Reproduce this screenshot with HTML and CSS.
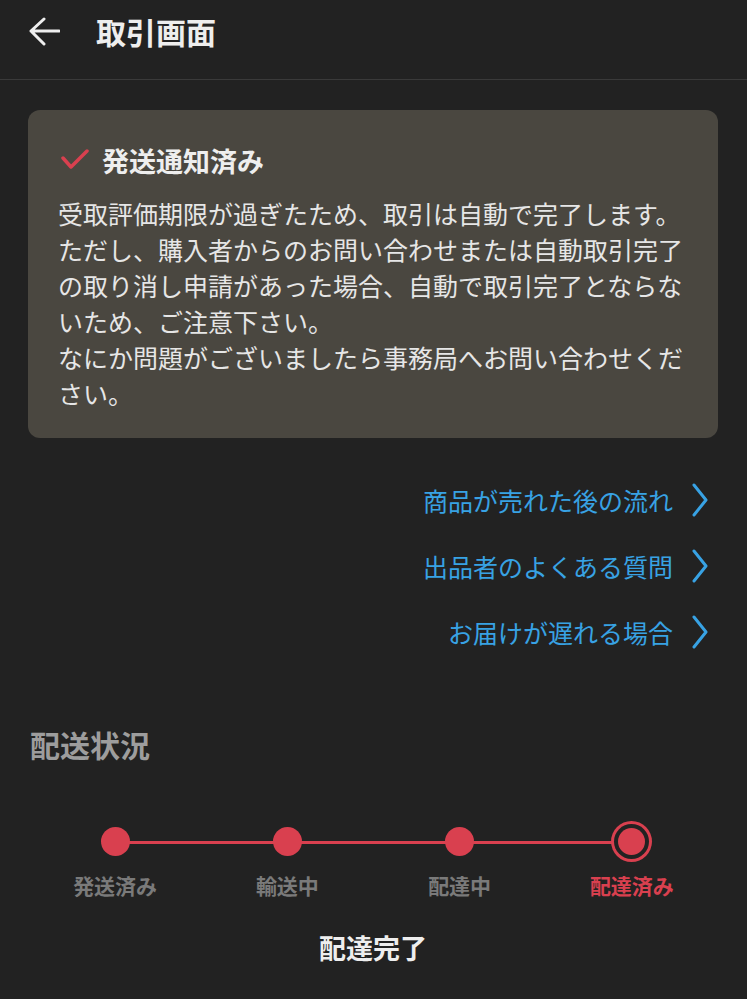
FILE: index.html
```html
<!DOCTYPE html>
<html lang="ja">
<head>
    <meta charset="UTF-8">
    <meta name="viewport" content="width=device-width, initial-scale=1.0">
    <title>取引画面</title>
    <link rel="stylesheet" href="styles.css">
</head>
<body>
    <header class="topbar">
        <svg class="back" width="32" height="32" viewBox="0 0 32 32">
            <path d="M3 14 L16 2 M3 14 L16 27 M3 14 L31 14" fill="none" stroke="#eeeeee" stroke-width="3" stroke-linecap="round" stroke-linejoin="round"/>
        </svg>
        <h1 class="title">取引画面</h1>
    </header>

    <main class="content">
        <section class="notice">
            <div class="notice-head">
                <svg class="check" width="28" height="24" viewBox="0 0 28 24">
                    <path d="M2 10 L10 19 L26 3" fill="none" stroke="#d9404f" stroke-width="3.5" stroke-linecap="round" stroke-linejoin="round"/>
                </svg>
                <span>発送通知済み</span>
            </div>
            <p class="notice-body">受取評価期限が過ぎたため、取引は自動で完了します。<br>ただし、購入者からのお問い合わせまたは自動取引完了の取り消し申請があった場合、自動で取引完了とならないため、ご注意下さい。<br>なにか問題がございましたら事務局へお問い合わせください。</p>
        </section>

        <nav class="links">
            <a class="link" href="#">商品が売れた後の流れ<svg class="chev" width="16" height="34" viewBox="0 0 16 34"><path d="M2 2 L14 17 L2 32" fill="none" stroke="#38a2e4" stroke-width="3" stroke-linecap="round" stroke-linejoin="round"/></svg></a>
            <a class="link" href="#">出品者のよくある質問<svg class="chev" width="16" height="34" viewBox="0 0 16 34"><path d="M2 2 L14 17 L2 32" fill="none" stroke="#38a2e4" stroke-width="3" stroke-linecap="round" stroke-linejoin="round"/></svg></a>
            <a class="link" href="#">お届けが遅れる場合<svg class="chev" width="16" height="34" viewBox="0 0 16 34"><path d="M2 2 L14 17 L2 32" fill="none" stroke="#38a2e4" stroke-width="3" stroke-linecap="round" stroke-linejoin="round"/></svg></a>
        </nav>

        <h2 class="section-title">配送状況</h2>

        <div class="stepper">
            <div class="step">
                <span class="dot"></span>
                <span class="label">発送済み</span>
            </div>
            <div class="step">
                <span class="dot"></span>
                <span class="label">輸送中</span>
            </div>
            <div class="step">
                <span class="dot"></span>
                <span class="label">配達中</span>
            </div>
            <div class="step current">
                <span class="dot"></span>
                <span class="label">配達済み</span>
            </div>
        </div>

        <p class="status">配達完了</p>
    </main>
</body>
</html>
```

FILE: styles.css
```css
body {
    margin: 0;
    background-color: #222222;
    color: #e6e6e6;
    font-family: "Noto Sans CJK JP", "Noto Sans", sans-serif;
}
.topbar {
    display: flex;
    align-items: center;
    height: 79px;
    border-bottom: 1px solid #3a3a3a;
    padding-left: 28px;
    box-sizing: content-box;
}
.back {
    margin-top: -14px;
    margin-right: 36px;
}
.title {
    margin: 0 0 18px 0;
    font-size: 30px;
    font-weight: 700;
    color: #eeeeee;
}
.content {
    padding: 0 29px 0 28px;
}
.notice {
    margin-top: 30px;
    background-color: #4a4740;
    border-radius: 12px;
    padding: 30px 30px 27px 30px;
}
.notice-head {
    display: flex;
    align-items: center;
    height: 40px;
    font-size: 27px;
    font-weight: 700;
    color: #eeeeee;
}
.check {
    margin-left: 3px;
    margin-right: 13px;
}
.notice-body {
    margin: 15px 0 0 0;
    font-size: 25px;
    line-height: 36px;
    color: #e6e6e6;
}
.links {
    margin-top: 44px;
    display: flex;
    flex-direction: column;
    align-items: flex-end;
    gap: 30px;
    padding-right: 10px;
}
.link {
    display: flex;
    align-items: center;
    height: 36px;
    font-size: 25px;
    color: #38a2e4;
    text-decoration: none;
}
.chev {
    margin-left: 19px;
}
.section-title {
    margin: 72px 0 0 2px;
    font-size: 30px;
    line-height: 45px;
    font-weight: 700;
    color: #9d9d9d;
}
.stepper {
    position: relative;
    display: grid;
    grid-template-columns: repeat(4, 1fr);
    margin-top: 53px;
    padding-left: 1px;
}
.stepper::before {
    content: "";
    position: absolute;
    top: 21px;
    left: 12.5%;
    right: 12.5%;
    height: 3px;
    background-color: #d9404f;
}
.step {
    display: flex;
    flex-direction: column;
    align-items: center;
}
.dot {
    position: relative;
    width: 29px;
    height: 29px;
    margin: 7px 0 8px;
    border-radius: 50%;
    background-color: #d9404f;
}
.step.current .dot {
    width: 27px;
    height: 27px;
    margin: 8px 0 9px;
    box-shadow: 0 0 0 4px #222222, 0 0 0 7px #d9404f;
}
.label {
    margin-top: 6px;
    font-size: 21px;
    line-height: 30px;
    font-weight: 700;
    color: #7a7a7a;
}
.step.current .label {
    color: #d9404f;
}
.status {
    margin: 28px 0 0 0;
    text-align: center;
    font-size: 27px;
    line-height: 40px;
    font-weight: 700;
    color: #eeeeee;
}
```
